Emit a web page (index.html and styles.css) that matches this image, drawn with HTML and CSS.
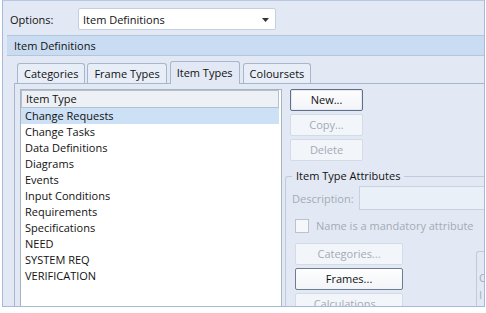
FILE: index.html
```html
<!DOCTYPE html>
<html lang="en">
<head>
  <meta charset="UTF-8">
  <title>Item Definitions</title>
  <link rel="stylesheet" href="styles.css">
</head>
<body>
  <div class="window">
    <div class="options-row">
      <span class="options-label">Options:</span>
      <div class="combo">
        <span>Item Definitions</span>
        <svg class="combo-arrow" width="7" height="4" viewBox="0 0 7 4"><path d="M0 0h7L3.5 4z" fill="#333"/></svg>
      </div>
    </div>
    <div class="section-bar">Item Definitions</div>
    <div class="inner">
      <div class="tabs">
        <div class="tab">Categories</div>
        <div class="tab">Frame Types</div>
        <div class="tab active">Item Types</div>
        <div class="tab">Coloursets</div>
      </div>
      <div class="tab-panel">
        <div class="list">
          <div class="list-head">Item Type</div>
          <div class="row selected">Change Requests</div>
          <div class="row">Change Tasks</div>
          <div class="row">Data Definitions</div>
          <div class="row">Diagrams</div>
          <div class="row">Events</div>
          <div class="row">Input Conditions</div>
          <div class="row">Requirements</div>
          <div class="row">Specifications</div>
          <div class="row">NEED</div>
          <div class="row">SYSTEM REQ</div>
          <div class="row">VERIFICATION</div>
        </div>
        <div class="side">
          <div class="btn-col">
            <div class="btn default">New...</div>
            <div class="btn disabled">Copy...</div>
            <div class="btn disabled">Delete</div>
          </div>
          <div class="group">
            <div class="legend">Item Type Attributes</div>
            <div class="field">
              <span class="field-label">Description:</span>
              <div class="input"></div>
            </div>
            <div class="check">
              <span class="check-box"></span>
              <span>Name is a mandatory attribute</span>
            </div>
            <div class="attr-body">
              <div class="btn-col wide">
                <div class="btn disabled">Categories...</div>
                <div class="btn">Frames...</div>
                <div class="btn disabled">Calculations...</div>
              </div>
              <div class="subgroup">
                <span class="sub-text">C</span>
                <span class="sub-text">I</span>
              </div>
            </div>
          </div>
        </div>
      </div>
    </div>
  </div>
</body>
</html>
```

FILE: styles.css
```css
body {
  margin: 0;
  background: #fff;
  font-family: "Open Sans", "Noto Sans", sans-serif;
  font-size: 11px;
  color: #111;
}
.window {
  margin-left: 2px;
  width: 481px;
  height: 305px;
  border: 1px solid #a3badb;
  border-top-color: #b7c8e0;
  background: #e3e9f4;
  overflow: hidden;
}
.options-row {
  display: flex;
  align-items: center;
  height: 22px;
  padding: 7px 0 0 7px;
}
.options-label {
  width: 68px;
}
.combo {
  display: flex;
  align-items: center;
  justify-content: space-between;
  width: 186px;
  height: 20px;
  padding: 0 6px 0 4px;
  background: #fff;
  border: 1px solid #c5d0de;
  border-radius: 2px;
}
.combo-arrow {
  margin-top: 1px;
}
.section-bar {
  margin: 5px 0 0 4px;
  height: 19px;
  line-height: 19px;
  padding-left: 7px;
  background: #c9dcf2;
  border-top: 1px solid #b2c6e0;
  border-bottom: 1px solid #b2c6e0;
}
.inner {
  padding: 5px 0 0 11px;
}
.tabs {
  display: flex;
  align-items: flex-end;
  height: 22px;
  padding-left: 3px;
  gap: 2px;
}
.tab {
  height: 19px;
  line-height: 19px;
  padding: 0 6px;
  background: #e8eef7;
  border: 1px solid #a7b6ca;
  border-bottom: none;
  border-radius: 3px 3px 0 0;
}
.tab.active {
  height: 22px;
  line-height: 21px;
  margin: 0 1px -1px;
  background: #e3e9f4;
  position: relative;
  z-index: 1;
}
.tab-panel {
  display: flex;
  gap: 8px;
  height: 230px;
  padding: 5px 0 0 5px;
  border-top: 1px solid #a7b6ca;
  border-left: 1px solid #a7b6ca;
}
.list {
  flex: none;
  width: 260px;
  background: #fff;
  border: 1px solid #a9b4c3;
}
.list-head {
  height: 16px;
  line-height: 16px;
  padding-left: 4px;
  background: #edf1f6;
  border: 1px solid #b5c0ce;
  margin-right: 2px;
}
.row {
  height: 16px;
  line-height: 16px;
  padding-left: 4px;
  margin-right: 2px;
}
.row.selected {
  background: #cce0f6;
}
.side {
  flex: 1;
  display: flex;
  flex-direction: column;
}
.btn-col {
  display: flex;
  flex-direction: column;
  gap: 3px;
  width: 73px;
}
.btn-col.wide {
  width: 108px;
}
.btn {
  height: 20px;
  line-height: 20px;
  text-align: center;
  background: linear-gradient(#fefefe, #f2f4f8);
  border: 1px solid #6f7d92;
  border-radius: 2px;
}
.btn.default {
  border-color: #5f6f88;
  box-shadow: inset 0 0 0 1px #e4ebf5;
}
.btn.disabled {
  color: #a3abb5;
  background: #f2f5fa;
  border-color: #d3dbe6;
}
.group {
  position: relative;
  margin: 15px 0 0 -5px;
  padding: 9px 0 0 6px;
  height: 200px;
  border: 1px solid #c0cbd9;
  border-right: none;
  border-radius: 3px 0 0 0;
}
.legend {
  position: absolute;
  top: -9px;
  left: 6px;
  padding: 0 4px;
  background: #e3e9f4;
}
.field {
  display: flex;
  align-items: center;
  gap: 5px;
}
.field-label {
  color: #a3abb5;
}
.input {
  flex: 1;
  height: 22px;
  background: #eaf0f8;
  border: 1px solid #c8d2df;
}
.check {
  display: flex;
  align-items: center;
  gap: 7px;
  margin: 8px 0 0 3px;
  color: #a3abb5;
}
.check-box {
  width: 12px;
  height: 12px;
  background: #f5f7fa;
  border: 1px solid #b9c3cf;
}
.attr-body {
  display: flex;
  gap: 73px;
  margin: 10px 0 0 3px;
}
.subgroup {
  margin-top: 8px;
  flex: 1;
  height: 80px;
  padding: 18px 0 0 2px;
  display: flex;
  flex-direction: column;
  gap: 2px;
  border: 1px solid #c0cbd9;
  border-right: none;
  border-radius: 3px 0 0 0;
  color: #a3abb5;
}
```
